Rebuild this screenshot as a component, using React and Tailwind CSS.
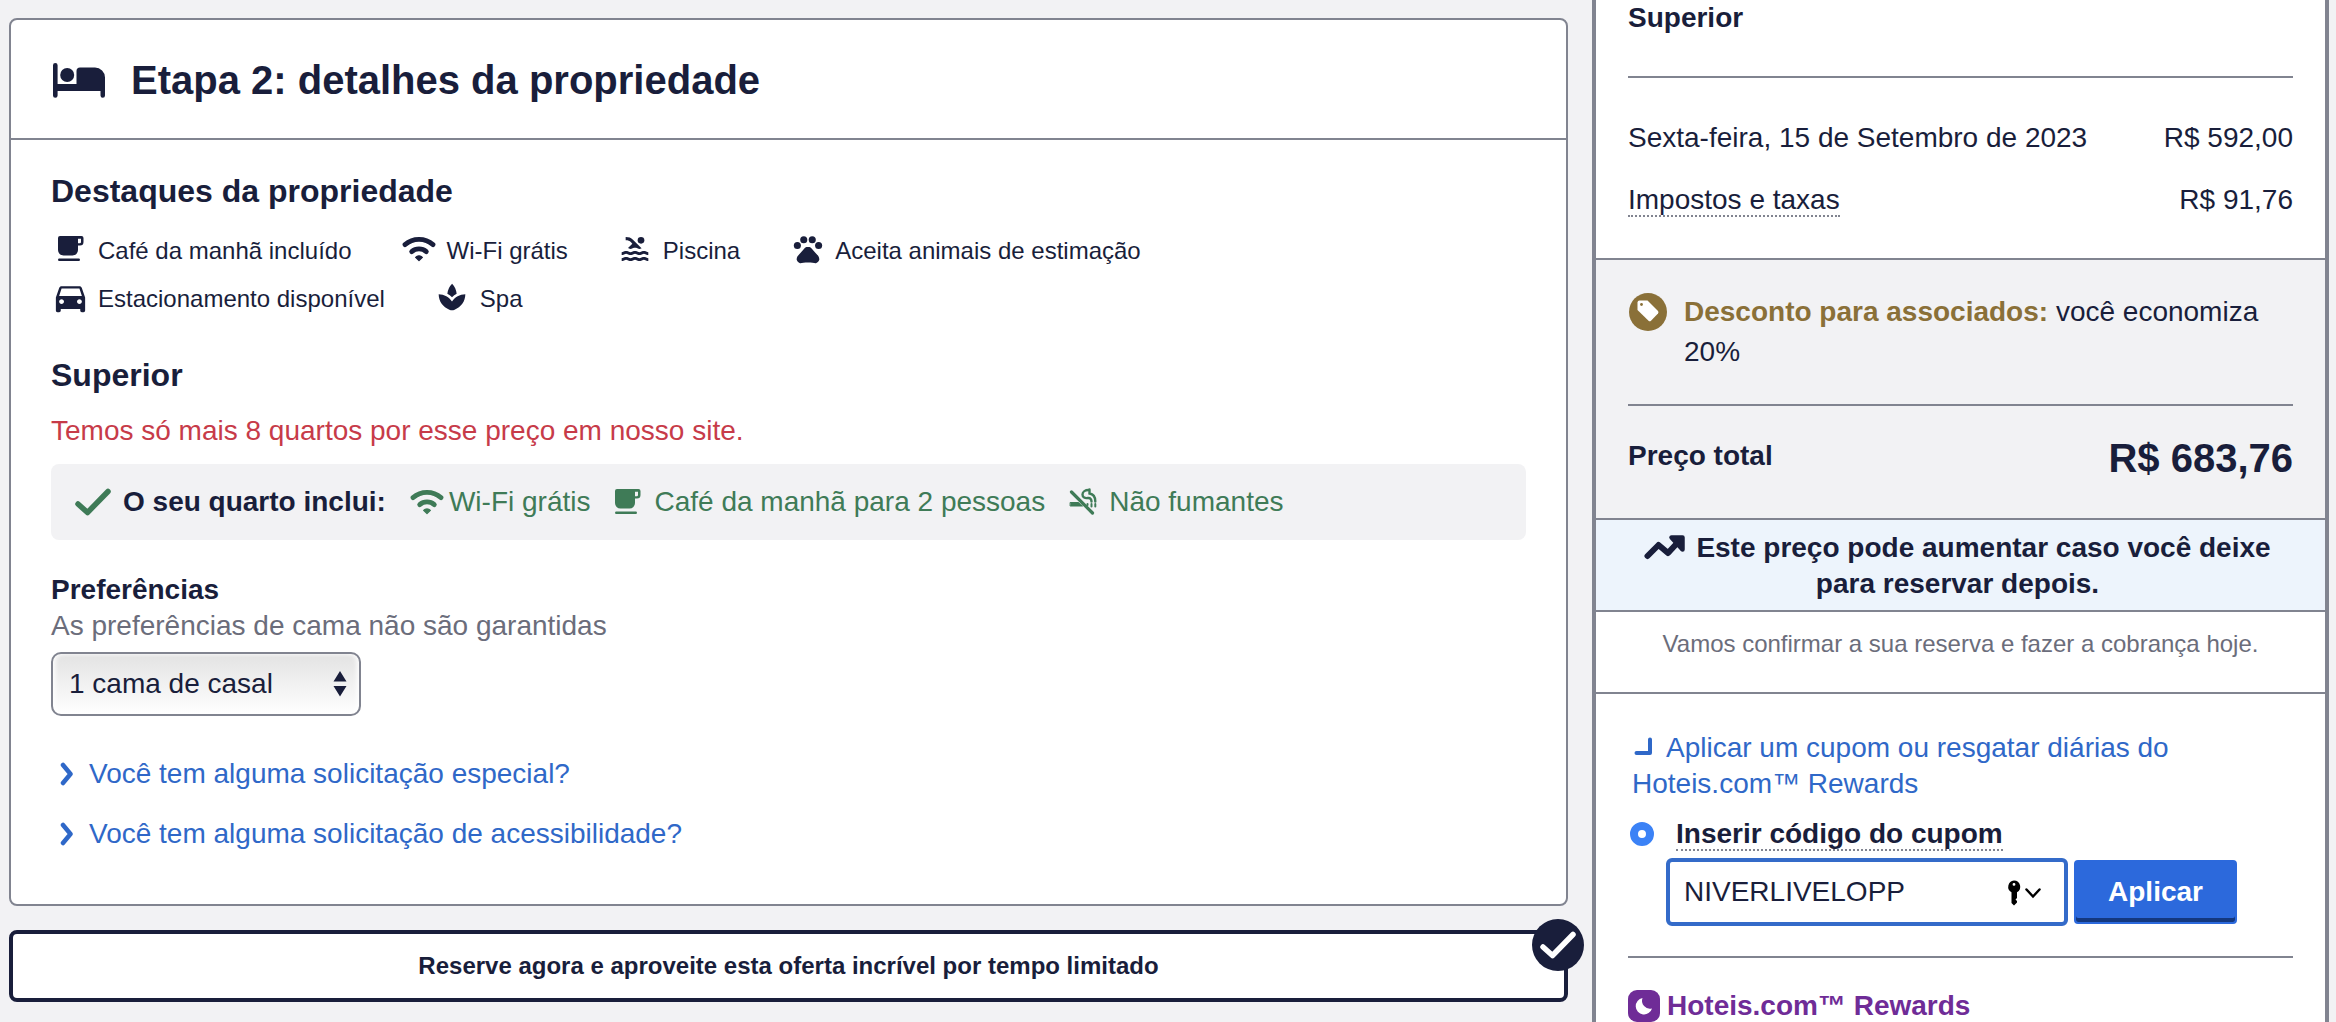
import { useState } from "react";
import { MdDirectionsCar, MdPets, MdPool, MdSpa } from "react-icons/md";

function BedIcon() {
  return (
    <svg viewBox="0 0 52 35" className="w-[52px] h-[35px] shrink-0" fill="currentColor" aria-hidden="true">
      <path d="M2.300 0A2.300 2.300 0 0 1 4.600 2.300V21H23.500V8a3.500 3.500 0 0 1 3.500-3.500H42a10 10 0 0 1 10 10V32.500a2.200 2.200 0 0 1-4.500 0V28H4.600V32.500a2.300 2.300 0 0 1-4.600 0V2.300A2.300 2.300 0 0 1 2.300 0Z" />
      <circle cx="14.200" cy="12" r="7" />
    </svg>
  );
}

function CupIcon() {
  return (
    <svg viewBox="0 0 26 26" className="size-[26px]" fill="currentColor" aria-hidden="true">
      <path
        fillRule="evenodd"
        d="M2 0H23.500a2 2 0 0 1 2 2V6a3.500 3.500 0 0 1-3.500 3.500H20V14a5.500 5.500 0 0 1-5.500 5.500H5.500a5.500 5.500 0 0 1-5.500-5.500V2A2 2 0 0 1 2 0ZM20 2.700V7.200h1.800A1.200 1.200 0 0 0 23 6V2.700Z"
      />
      <rect x="0" y="22.500" width="22" height="2.500" rx="1.200" />
    </svg>
  );
}

function WifiIcon() {
  return (
    <svg viewBox="0 0 34 26" className="w-[34px] h-[26px]" fill="none" stroke="currentColor" strokeWidth="4.800" strokeLinecap="round" aria-hidden="true">
      <path d="M3 8.600C11 1.500 23 1.500 31 8.600" />
      <path d="M9.700 15.600C13.800 12 20.200 12 24.300 15.600" />
      <path d="M13.600 21.300C15.500 19.400 18.500 19.400 20.400 21.300L17 24.600Z" fill="currentColor" strokeWidth="1.200" strokeLinejoin="round" />
    </svg>
  );
}

function SmokeFreeIcon() {
  return (
    <svg viewBox="0 0 28 28" className="size-7" fill="none" stroke="currentColor" strokeLinecap="round" aria-hidden="true">
      <path d="M2.500 4L23.500 25" strokeWidth="3.200" />
      <path d="M1.500 14.500H9.500L13.500 18H1.500Z" fill="currentColor" strokeWidth="1" strokeLinejoin="round" />
      <path d="M19.500 2C16.500 2 13.500 3.500 13.500 6.500S16 10.500 19 10C21.500 9.800 22.500 11.500 22.500 13.500" strokeWidth="2.400" />
      <path d="M20.500 1.500V5.500C24 6 26.300 8.500 26.300 13.500" strokeWidth="2.400" />
      <path d="M18.500 16V17M22.500 16V18.500M26.300 16V18.500" strokeWidth="2" />
    </svg>
  );
}

function CheckIcon({ className }) {
  return (
    <svg viewBox="0 0 36 28" className={className} fill="none" stroke="currentColor" strokeWidth="5.500" strokeLinecap="round" strokeLinejoin="round" aria-hidden="true">
      <path d="M3 16L12.500 24.500L33 3.500" />
    </svg>
  );
}

function ChevronIcon() {
  return (
    <svg viewBox="0 0 14 24" className="w-[14px] h-6" fill="none" stroke="currentColor" strokeWidth="4.500" strokeLinecap="round" strokeLinejoin="round" aria-hidden="true">
      <path d="M3 3L10.500 12L3 21" />
    </svg>
  );
}

function TrendIcon() {
  return (
    <svg viewBox="0 0 42 26" className="inline-block w-[42px] h-[26px] mr-2.5 align-[-3px]" fill="none" stroke="currentColor" strokeWidth="6" strokeLinecap="round" strokeLinejoin="round" aria-hidden="true">
      <path d="M3.500 22L14.500 11L24 19L36 6" />
      <path d="M27.500 3.500H38.500V15.500Z" fill="currentColor" strokeWidth="4.500" />
    </svg>
  );
}

function TagIcon() {
  return (
    <svg viewBox="0 0 38 38" className="size-[38px] shrink-0" aria-hidden="true">
      <circle cx="19" cy="19" r="19" fill="#8a7038" />
      <path d="M10.500 7.500H18.500L29 18A2 2 0 0 1 29 20.500L22 27.800A2 2 0 0 1 19.500 27.800L8.500 17V9.500A2 2 0 0 1 10.500 7.500Z" fill="#fff" />
      <circle cx="12.500" cy="11.500" r="1.400" fill="#8a7038" />
    </svg>
  );
}

function MoonIcon() {
  return (
    <svg viewBox="0 0 32 32" className="size-8 shrink-0" aria-hidden="true">
      <rect width="32" height="32" rx="9" fill="#6f2c97" />
      <path d="M14.500 8A8.300 8.300 0 1 0 24 18.500A8 8 0 0 1 14.500 8Z" fill="#fff" />
    </svg>
  );
}

const highlights = [
  { label: "Café da manhã incluído", icon: <CupIcon /> },
  { label: "Wi-Fi grátis", icon: <WifiIcon /> },
  { label: "Piscina", icon: <MdPool className="size-8" /> },
  { label: "Aceita animais de estimação", icon: <MdPets className="size-[34px]" /> },
  { label: "Estacionamento disponível", icon: <MdDirectionsCar className="size-[39px]" /> },
  { label: "Spa", icon: <MdSpa className="size-8" /> },
];

const requests = ["Você tem alguma solicitação especial?", "Você tem alguma solicitação de acessibilidade?"];

function PropertyDetails() {
  return (
    <section className="bg-white border-2 border-[#818490] rounded-lg">
      <header className="flex items-center gap-[26px] pl-[42px] pr-10 pt-9 pb-[34px] border-b-2 border-[#818490]">
        <BedIcon />
        <h1 className="text-[40px] leading-[48px] font-bold">Etapa 2: detalhes da propriedade</h1>
      </header>

      <div className="px-10 pt-[31px] pb-[52px]">
        <h2 className="text-[32px] leading-10 font-bold">Destaques da propriedade</h2>
        <ul className="mt-6 max-w-[1240px] flex flex-wrap gap-x-12 gap-y-4 text-2xl">
          {highlights.map((item) => (
            <li key={item.label} className="flex items-center gap-2 h-8">
              <span className="w-[39px] pb-1 flex justify-center">{item.icon}</span>
              {item.label}
            </li>
          ))}
        </ul>

        <h2 className="mt-10 text-[32px] leading-10 font-bold">Superior</h2>
        <p className="mt-[18px] text-[#c73b49]">Temos só mais 8 quartos por esse preço em nosso site.</p>

        <div className="mt-[15px] py-5 px-6 flex flex-wrap items-center gap-x-5 bg-[#f2f2f4] rounded-lg text-[#3f7b57]">
          <span className="pr-[3px] flex items-center gap-3">
            <CheckIcon className="w-9 h-7" />
            <strong className="text-[#191e3b]">O seu quarto inclui:</strong>
          </span>
          <span className="flex items-center gap-1">
            <span className="w-9 flex justify-center"><WifiIcon /></span>
            Wi-Fi grátis
          </span>
          <span className="flex items-center gap-2">
            <span className="w-9 flex justify-center"><CupIcon /></span>
            Café da manhã para 2 pessoas
          </span>
          <span className="flex items-center gap-2">
            <span className="w-9 flex justify-center"><SmokeFreeIcon /></span>
            Não fumantes
          </span>
        </div>

        <label htmlFor="bed" className="block mt-8 font-bold">Preferências</label>
        <p className="text-[#6b6d7b]">As preferências de cama não são garantidas</p>
        <div className="relative mt-2 w-[310px]">
          <select
            id="bed"
            className="appearance-none w-full h-16 pl-4 pr-10 border-2 border-[#818490] rounded-[10px] bg-linear-to-b from-[#e3e3e3] to-white shadow-[inset_3px_0_5px_-1px_#fff,inset_-3px_0_5px_-1px_#fff]"
          >
            <option>1 cama de casal</option>
            <option>2 camas de solteiro</option>
          </select>
          <svg viewBox="0 0 14 26" className="absolute right-[14px] top-[19px] w-[14px] h-[26px] pointer-events-none" fill="currentColor" aria-hidden="true">
            <path d="M7 0L13.500 10.500H0.500ZM0.500 15H13.500L7 25.500Z" />
          </svg>
        </div>

        <ul className="mt-10 flex flex-col gap-6 text-[#2f68c8]">
          {requests.map((text) => (
            <li key={text} className="flex">
              <a href="#" className="flex items-center gap-1.5">
                <span className="w-8 flex justify-center"><ChevronIcon /></span>
                {text}
              </a>
            </li>
          ))}
        </ul>
      </div>
    </section>
  );
}

function CouponForm() {
  const [code, setCode] = useState("NIVERLIVELOPP");

  return (
    <form onSubmit={(e) => e.preventDefault()}>
      <div className="mt-3.5 pl-0.5 flex items-center gap-[22px]">
        <input
          id="coupon-option"
          type="radio"
          name="discount"
          defaultChecked
          className="appearance-none size-6 rounded-full border-8 border-[#3b82f6] bg-white"
        />
        <label htmlFor="coupon-option" className="font-bold">
          <span className="border-b-2 border-dotted border-[#818490]">Inserir código do cupom</span>
        </label>
      </div>
      <div className="mt-1.5 pl-[38px] flex items-center gap-1.5">
        <div className="relative w-[402px]">
          <input
            type="text"
            aria-label="Código do cupom"
            value={code}
            onChange={(e) => setCode(e.target.value)}
            className="w-full h-[68px] pl-3.5 pr-20 bg-white border-4 border-[#346bc9] rounded-md outline-none"
          />
          <svg viewBox="0 0 34 26" className="absolute right-[27px] top-[22px] w-[34px] h-[26px] text-black" aria-hidden="true">
            <path
              fillRule="evenodd"
              fill="currentColor"
              d="M7 0.500A6.300 6.300 0 0 1 10 12.300V18L8.500 19.500L10 21V22.500L7 25.500L4.500 23V12.300A6.300 6.300 0 0 1 7 0.500ZM7 3A1.400 1.400 0 1 0 7 5.800A1.400 1.400 0 1 0 7 3Z"
            />
            <path d="M19.500 9.500L26 16.500L32.500 9.500" fill="none" stroke="currentColor" strokeWidth="2.500" strokeLinecap="round" />
          </svg>
        </div>
        <button
          type="submit"
          className="h-16 w-[163px] rounded bg-[#2c69dc] text-white font-bold border-2 border-[#2c69dc] shadow-[inset_0_-4px_0_#14387f]"
        >
          Aplicar
        </button>
      </div>
    </form>
  );
}

function PriceSummary() {
  return (
    <aside className="bg-white border-x-4 border-[#818490]">
      <div className="px-8 pb-10 border-b-2 border-[#818490]">
        <h2 className="font-bold">Superior</h2>
        <hr className="mt-10 border-t-2 border-[#818490]" />
        <dl className="mt-[42px] flex flex-col gap-[26px]">
          <div className="flex justify-between">
            <dt>Sexta-feira, 15 de Setembro de 2023</dt>
            <dd>R$ 592,00</dd>
          </div>
          <div className="flex justify-between">
            <dt>
              <span className="border-b-2 border-dotted border-[#818490]">Impostos e taxas</span>
            </dt>
            <dd>R$ 91,76</dd>
          </div>
        </dl>
      </div>

      <div className="px-8 pt-8 bg-[#f2f2f4] border-b-2 border-[#818490]">
        <div className="pl-px flex items-start gap-[17px]">
          <span className="h-10 flex items-center"><TagIcon /></span>
          <p className="leading-10">
            <strong className="text-[#8a7038]">Desconto para associados:</strong> você economiza 20%
          </p>
        </div>
        <hr className="mt-8 border-t-2 border-[#818490]" />
        <div className="pt-7 pb-9 flex justify-between items-start font-bold">
          <span className="leading-11">Preço total</span>
          <span className="text-[40px] leading-12">R$ 683,76</span>
        </div>
      </div>

      <p className="pl-[26px] pr-8 pt-2.5 pb-2 bg-[#edf4fc] border-b-2 border-[#818490] text-center font-bold">
        <TrendIcon />
        Este preço pode aumentar caso você deixe para reservar depois.
      </p>

      <p className="px-8 pt-4 pb-8 border-b-2 border-[#818490] text-center text-2xl text-[#6b6d7b]">
        Vamos confirmar a sua reserva e fazer a cobrança hoje.
      </p>

      <div className="px-8 pt-9">
        <a href="#" className="block pl-1 text-[#2f68c8]">
          <svg viewBox="0 0 20 20" className="inline-block size-5 ml-0.5 mr-3 align-baseline" fill="none" stroke="currentColor" strokeWidth="4" strokeLinecap="round" strokeLinejoin="round" aria-hidden="true">
            <path d="M2.500 16H16V2.500" />
          </svg>
          Aplicar um cupom ou resgatar diárias do Hoteis.com™ Rewards
        </a>
        <CouponForm />
        <hr className="mt-[30px] border-t-2 border-[#818490]" />
        <div className="mt-8 flex items-center gap-[7px] leading-8 font-bold text-[#6f2c97]">
          <MoonIcon />
          Hoteis.com™ Rewards
        </div>
      </div>
    </aside>
  );
}

export default function App() {
  return (
    <div className="min-h-screen grid grid-cols-[1559fr_737fr] gap-6 pl-[9px] pr-[7px] bg-[#f2f2f4] text-[#191e3b] text-[28px] leading-9 font-['Liberation_Sans',Arial,sans-serif]">
      <main className="pt-[18px]">
        <PropertyDetails />
        <div className="relative mt-6 py-4 bg-white border-4 border-[#191e3b] rounded-lg text-center text-2xl leading-8 font-bold">
          Reserve agora e aproveite esta oferta incrível por tempo limitado
          <span className="absolute -right-5 -top-[15px] size-[52px] rounded-full bg-[#191e3b] text-white flex items-center justify-center">
            <CheckIcon className="w-9 h-7" />
          </span>
        </div>
      </main>
      <PriceSummary />
    </div>
  );
}
